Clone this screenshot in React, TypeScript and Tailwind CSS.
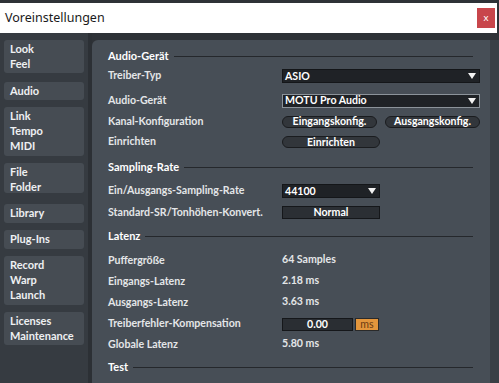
const navGroups = [
  { items: ["Look", "Feel"], cls: "h-[33px] mt-[7px]" },
  { items: ["Audio"], cls: "h-[18px] mt-[9px]" },
  { items: ["Link", "Tempo", "MIDI"], cls: "h-[49px] mt-[7px]" },
  { items: ["File", "Folder"], cls: "h-[30px] mt-[7px]" },
  { items: ["Library"], cls: "h-[19px] mt-[11px]" },
  { items: ["Plug-Ins"], cls: "h-[19px] mt-[7px]" },
  { items: ["Record", "Warp", "Launch"], cls: "h-[49px] mt-[7px]" },
  { items: ["Licenses", "Maintenance"], cls: "h-[33px] mt-[7px]" },
];

const Caret = () => (
  <svg width="8" height="6" viewBox="0 0 8 6" className="shrink-0">
    <path d="M0 0 H8 L4 6 Z" fill="#f2f2f2" />
  </svg>
);

const Section = ({ title, className }: { title: string; className: string }) => (
  <div className={`flex items-center gap-[5px] pr-[7px] ${className}`}>
    <span className="font-bold text-[11px] text-white">{title}</span>
    <div className="flex-1 h-px bg-[#25282c]" />
  </div>
);

const Row = ({
  label,
  className,
  children,
}: {
  label: string;
  className: string;
  children?: React.ReactNode;
}) => (
  <div className={`flex items-center ${className}`}>
    <span className="w-[174px] shrink-0">{label}</span>
    {children}
  </div>
);

const Dropdown = ({
  value,
  className,
  focused,
}: {
  value: string;
  className: string;
  focused?: boolean;
}) => (
  <div
    className={`h-[14px] flex items-center justify-between pl-[2px] pr-[3px] bg-[#1f2226] border ${
      focused ? "border-[#8c939a]" : "border-[#141619]"
    } text-white font-bold leading-none ${className}`}
  >
    <span>{value}</span>
    <Caret />
  </div>
);

const Pill = ({ label, className }: { label: string; className: string }) => (
  <div
    className={`h-[12px] rounded-full bg-[#32363b] border border-[#1a1c1f] flex items-center justify-center text-white font-bold leading-none ${className}`}
  >
    {label}
  </div>
);

export default function App() {
  return (
    <div
      className="w-[499px] h-[383px] overflow-hidden bg-[#2e3237] flex flex-col text-[11px] text-[#e4e6e8]"
      style={{ fontFamily: "Lato, 'Noto Sans', sans-serif" }}
    >
      <div className="h-[3px] shrink-0" />
      <div className="h-[30px] shrink-0 mr-[2px] bg-white flex items-center justify-between pl-[5px] pr-[2px]">
        <span
          className="text-[12.5px] text-[#1a1a1a]"
          style={{ fontFamily: "'Noto Sans', 'Open Sans', sans-serif" }}
        >
          Voreinstellungen
        </span>
        <div className="w-[18px] h-[20px] bg-[#c8464b] flex items-center justify-center text-white text-[10px] leading-none pb-[2px]">
          x
        </div>
      </div>

      <div className="flex flex-1 min-h-0">
        <div className="w-[88px] shrink-0 bg-[#363b41] pl-[4px] pr-[4px] flex flex-col">
          {navGroups.map((g) => (
            <div
              key={g.items[0]}
              className={`rounded-[3px] bg-[#464c53] pl-[6px] pt-[1px] font-bold text-[#eef0f2] leading-[15px] ${g.cls}`}
            >
              {g.items.map((t) => (
                <div key={t}>{t}</div>
              ))}
            </div>
          ))}
        </div>

        <div className="w-[4px] shrink-0 bg-[#2c3035]" />

        <div className="flex-1 pt-[7px] flex">
          <div className="w-[398px] bg-[#474e56] rounded-tl-[6px] pl-[16px] pr-[10px] pt-[8px] flex flex-col font-bold text-[10.6px]">
            <Section title="Audio-Gerät" className="h-[16px]" />
            <Row label="Treiber-Typ" className="h-[24px]">
              <Dropdown value="ASIO" className="w-[198px]" />
            </Row>
            <Row label="Audio-Gerät" className="h-[25px]">
              <Dropdown value="MOTU Pro Audio" className="w-[198px]" focused />
            </Row>
            <Row label="Kanal-Konfiguration" className="h-[17px]">
              <Pill label="Eingangskonfig." className="w-[95px]" />
              <Pill label="Ausgangskonfig." className="w-[95px] ml-[8px]" />
            </Row>
            <Row label="Einrichten" className="h-[24px]">
              <Pill label="Einrichten" className="w-[98px]" />
            </Row>
            <Section title="Sampling-Rate" className="h-[26px]" />
            <Row label="Ein/Ausgangs-Sampling-Rate" className="h-[22px]">
              <Dropdown value="44100" className="w-[98px]" />
            </Row>
            <Row label="Standard-SR/Tonhöhen-Konvert." className="h-[21px]">
              <div className="w-[98px] h-[13px] bg-[#2b2f34] border border-[#15171a] flex items-center justify-center text-white font-bold leading-none">
                Normal
              </div>
            </Row>
            <Section title="Latenz" className="h-[27px]" />
            <Row label="Puffergröße" className="h-[21px]">
              <span className="-mt-[2px]">64 Samples</span>
            </Row>
            <Row label="Eingangs-Latenz" className="h-[21px]">
              <span className="-mt-[2px]">2.18 ms</span>
            </Row>
            <Row label="Ausgangs-Latenz" className="h-[21px]">
              <span className="-mt-[2px]">3.63 ms</span>
            </Row>
            <Row label="Treiberfehler-Kompensation" className="h-[21px]">
              <div className="flex items-center mt-[2px]">
                <div className="w-[71px] h-[13px] bg-[#2a2e33] border border-[#15171a] flex items-center justify-center text-white leading-none">
                  0.00
                </div>
                <div className="w-[24px] h-[13px] ml-[2px] bg-[#e3963c] border border-[#2a2a2a] flex items-center justify-center text-[#6a3b12] font-normal leading-none">
                  ms
                </div>
              </div>
            </Row>
            <Row label="Globale Latenz" className="h-[21px]">
              <span className="-mt-[2px]">5.80 ms</span>
            </Row>
            <Section title="Test" className="h-[24px]" />
          </div>
          <div className="flex-1 bg-[#3a3f45]" />
        </div>
      </div>
    </div>
  );
}
